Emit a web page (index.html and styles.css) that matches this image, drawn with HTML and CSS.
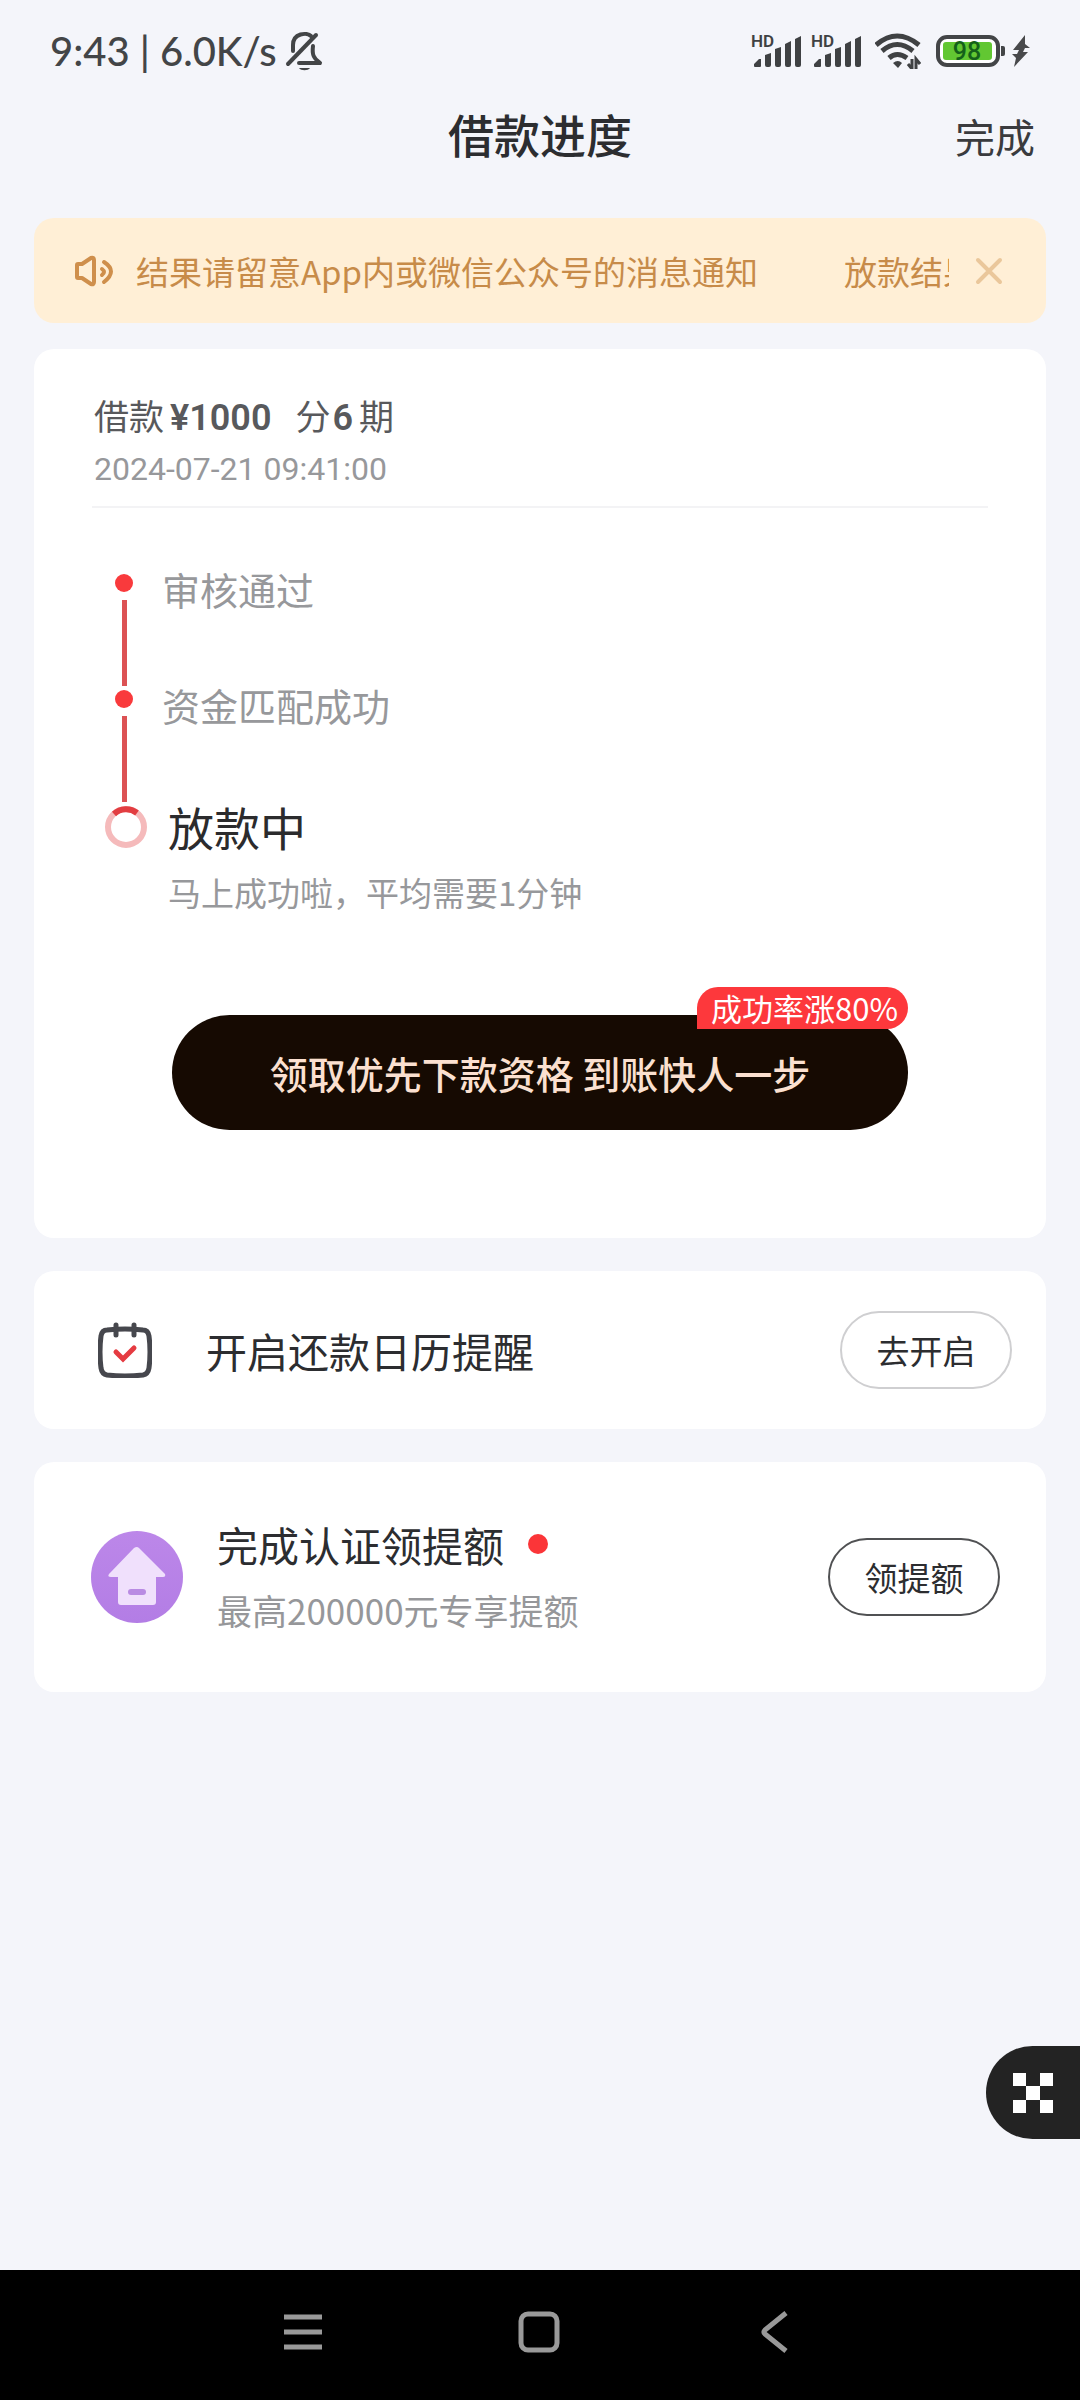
FILE: index.html
```html
<!DOCTYPE html>
<html lang="zh-CN">
<head>
<meta charset="utf-8">
<meta name="viewport" content="width=device-width, initial-scale=1">
<title>借款进度</title>
<link rel="stylesheet" href="styles.css">
</head>
<body>
<div class="status">
  <div class="status-left">
    <span>9:43 | 6.0K/s</span>
    <svg class="bell" width="38" height="40" viewBox="0 0 38 40" fill="none" stroke="#434547" stroke-width="4" stroke-linecap="round" stroke-linejoin="round">
      <path d="M8 20v-6c0-12 14-13 18-9"/>
      <path d="M28 15c-1 8 0 12 7 17H14"/>
      <path d="M3 33L31 4"/>
      <path d="M14 37h11c-2 3-9 3-11 0z" fill="#434547" stroke="none"/>
    </svg>
  </div>
  <div class="status-right">
    <svg class="signal" width="50" height="36" viewBox="0 0 50 36" fill="#3f4143">
      <text class="hd" x="-1" y="14">HD</text>
      <path d="M2 33v-2l5-5h2v7q0 1-1 1H3q-1 0-1-1zM13 22l6-2v12q0 2-2 2h-2q-2 0-2-2zM23 16l6-2v18q0 2-2 2h-2q-2 0-2-2zM33 11l6-3v24q0 2-2 2h-2q-2 0-2-2zM43 6l6-3v29q0 2-2 2h-2q-2 0-2-2z"/>
    </svg>
    <svg class="signal" width="50" height="36" viewBox="0 0 50 36" fill="#3f4143">
      <text class="hd" x="-1" y="14">HD</text>
      <path d="M2 33v-2l5-5h2v7q0 1-1 1H3q-1 0-1-1zM13 22l6-2v12q0 2-2 2h-2q-2 0-2-2zM23 16l6-2v18q0 2-2 2h-2q-2 0-2-2zM33 11l6-3v24q0 2-2 2h-2q-2 0-2-2zM43 6l6-3v29q0 2-2 2h-2q-2 0-2-2z"/>
    </svg>
    <svg class="wifi" width="46" height="36" viewBox="0 0 46 36" fill="none" stroke="#3f4143" stroke-width="5">
      <path d="M1 12Q22 -6 44 12"/>
      <path d="M7 18Q22 5 38 18"/>
      <path d="M14 25Q22 18 32 25"/>
      <path d="M18 30q5-4 9 0l-4 5z" fill="#3f4143" stroke="none"/>
      <path d="M37 26v10l-4-5M41 36V26l4 5" stroke-width="3"/>
    </svg>
    <svg class="battery" width="70" height="32" viewBox="0 0 70 32">
      <rect x="2" y="2" width="60" height="28" rx="9" fill="#fff" stroke="#434547" stroke-width="4"/>
      <rect x="7" y="7" width="49" height="18" rx="3" fill="#62c732"/>
      <path d="M65 11h2q2 0 2 2v6q0 2-2 2h-2z" fill="#434547"/>
      <text class="pct" x="31" y="25" text-anchor="middle">98</text>
    </svg>
    <svg width="18" height="32" viewBox="0 0 18 32" fill="#48494b"><path d="M13 0L1 15h6l-2 4H0l4 4-2 9L16 17h-5l2-4h5l-5-4z"/></svg>
  </div>
</div>

<header class="topbar">
  <h1>借款进度</h1>
  <button class="done" type="button">完成</button>
</header>

<main>
  <section class="notice">
    <svg width="40" height="36" viewBox="0 0 40 36" fill="none" stroke="#cf8f4c" stroke-width="4" stroke-linejoin="round" stroke-linecap="round">
      <path d="M4 11h4l9-6q3-1 3 2v22q0 3-3 2l-9-6H4q-1 0-1-1V12q0-1 1-1z"/>
      <path d="M30 9q14 9 0 20"/>
      <path d="M28 16q4 3 0 6"/>
    </svg>
    <div class="ticker"><span>结果请留意App内或微信公众号的消息通知</span><span>放款结果</span></div>
    <button class="close" type="button" aria-label="关闭">
      <svg width="28" height="28" viewBox="0 0 28 28" stroke="#eac79b" stroke-width="4" stroke-linecap="round"><path d="M3 3l22 22M25 3L3 25"/></svg>
    </button>
  </section>

  <section class="card loan">
    <div class="summary">
      <p class="amount">借款<b>¥1000</b><span class="term">分<b>6</b>期</span></p>
      <time class="time">2024-07-21 09:41:00</time>
    </div>
    <ol class="steps">
      <li class="step"><span class="rail"><i class="dot"></i><i class="line"></i></span><span class="label">审核通过</span></li>
      <li class="step"><span class="rail"><i class="dot"></i><i class="line"></i></span><span class="label">资金匹配成功</span></li>
      <li class="step current">
        <span class="rail">
          <svg width="44" height="44" viewBox="0 0 44 44" fill="none" stroke-width="6"><circle cx="22" cy="22" r="18" stroke="#f5babb"/><path d="M10 9A18 18 0 0 1 33 8" stroke="#e23d41"/></svg>
        </span>
        <div><strong>放款中</strong><p>马上成功啦，平均需要1分钟</p></div>
      </li>
    </ol>
    <button class="cta" type="button">领取优先下款资格 到账快人一步<span class="badge">成功率涨80%</span></button>
  </section>

  <section class="card row calendar">
    <svg width="54" height="56" viewBox="0 0 54 56" fill="none" stroke="#46474d" stroke-width="5" stroke-linecap="round">
      <path d="M9 8Q27 6 45 8Q50 8 51 14Q53 30 51 46Q50 52 45 53Q27 55 9 53Q4 52 3 46Q1 30 3 14Q4 8 9 8z"/>
      <path d="M18 3v10M36 3v10"/>
      <path d="M18 30l7 7 11-11" stroke="#e53b41"/>
    </svg>
    <h2>开启还款日历提醒</h2>
    <button class="pill" type="button">去开启</button>
  </section>

  <section class="card row quota">
    <svg width="92" height="92" viewBox="0 0 92 92">
      <defs><linearGradient id="violet" x1="0" y1="0" x2="0" y2="1"><stop offset="0" stop-color="#bc87e9"/><stop offset="1" stop-color="#b37de5"/></linearGradient></defs>
      <circle cx="46" cy="46" r="46" fill="url(#violet)"/>
      <path d="M43 17q3-2 5 0l26 26q1 3-2 3h-7v25q0 3-3 3H30q-3 0-3-3V46h-7q-4 0-2-3z" fill="#f0e0fc"/>
      <rect x="37" y="58" width="18" height="6" rx="3" fill="#b98be3"/>
    </svg>
    <div class="quota-text">
      <h2>完成认证领提额<i class="new"></i></h2>
      <p>最高200000元专享提额</p>
    </div>
    <button class="pill dark" type="button">领提额</button>
  </section>
</main>

<button class="float" type="button" aria-label="快捷入口">
  <svg width="40" height="40" viewBox="0 0 40 40" fill="#fff"><path d="M0 0h13v13H0zM27 0h13v13H27zM13 13h14v14H13zM0 27h13v13H0zM27 27h13v13H27z"/></svg>
</button>

<nav class="sysnav">
  <button type="button" aria-label="菜单"><svg width="44" height="44" viewBox="0 0 44 44" stroke="#999" stroke-width="5"><path d="M3 7h38M3 22h38M3 37h38"/></svg></button>
  <button type="button" aria-label="主屏幕"><svg width="44" height="44" viewBox="0 0 44 44" fill="none" stroke="#999" stroke-width="5"><rect x="4" y="4" width="36" height="36" rx="7"/></svg></button>
  <button type="button" aria-label="返回"><svg width="44" height="44" viewBox="0 0 44 44" fill="none" stroke="#999" stroke-width="5" stroke-linejoin="round"><path d="M33 3L12 20q-2 2 0 4L33 41"/></svg></button>
</nav>
</body>
</html>
```
FILE: styles.css
```css
* { box-sizing: border-box; }
body {
  margin: 0;
  min-height: 100vh;
  display: flex;
  flex-direction: column;
  position: relative;
  background: #f4f5fa;
  color: #2c2d30;
  font-family: "Noto Sans CJK SC", sans-serif;
}
h1, h2, p, ol { margin: 0; padding: 0; font-weight: 400; }
button { font: inherit; color: inherit; border: 0; background: none; padding: 0; cursor: pointer; }
svg { display: block; flex: none; }

.status {
  display: flex;
  justify-content: space-between;
  align-items: center;
  height: 102px;
  padding: 0 50px;
  color: #434547;
  font: 500 40px/48px Lato, sans-serif;
}
.status-left { display: flex; align-items: center; gap: 8px; }
.status-right { display: flex; align-items: center; }
.signal { margin-right: 10px; overflow: visible; }
.wifi { margin: 0 15px 0 3px; }
.battery { margin-right: 6px; }
.hd { font: 600 17px Roboto, sans-serif; }
.pct { font: 500 25px Roboto, sans-serif; fill: #14611a; }

.topbar {
  display: grid;
  grid-template-columns: 1fr auto 1fr;
  align-items: center;
  height: 68px;
  padding: 0 45px;
}
.topbar h1 { grid-column: 2; padding-bottom: 6px; font-size: 46px; line-height: 62px; font-weight: 500; }
.done { justify-self: end; font-size: 40px; line-height: 68px; color: #3a3b3e; }

main {
  flex: 1;
  display: flex;
  flex-direction: column;
  gap: 33px;
  padding: 48px 34px;
}
.notice {
  display: flex;
  align-items: center;
  height: 105px;
  margin-bottom: -7px;
  padding: 0 43px 0 40px;
  border-radius: 20px;
  background: #ffefd6;
  color: #c78b49;
}
.ticker {
  flex: 1;
  display: flex;
  gap: 86px;
  margin: 0 26px 0 22px;
  overflow: hidden;
  white-space: nowrap;
  font-size: 33px;
  line-height: 48px;
}
.ticker span { flex: none; }

.card { background: #fff; border-radius: 20px; }
.loan { display: flex; flex-direction: column; padding: 40px 58px 108px; }
.summary { border-bottom: 2px solid #f3f3f5; padding: 0 2px 12px; }
.amount { font-size: 35px; line-height: 52px; color: #58595c; }
.amount b { font-family: Roboto, sans-serif; font-weight: 600; font-size: 36px; margin: 0 6px; }
.term { margin-left: 18px; }
.term b { margin: 0 6px 0 2px; }
.time { display: block; font: 400 32px/50px Roboto, sans-serif; color: #97989b; }

.steps { list-style: none; padding: 54px 0 0 10px; color: #97989b; }
.step { display: flex; gap: 16px; height: 116px; }
.rail { display: flex; flex-direction: column; align-items: center; width: 44px; padding-top: 12px; }
.dot { flex: none; width: 18px; height: 18px; border-radius: 50%; background: #f93a3c; }
.line { flex: none; width: 5px; height: 86px; margin-top: 8px; background: #dc5254; }
.label { font-size: 38px; line-height: 54px; }
.current { height: auto; gap: 20px; margin-left: 2px; }
.current .rail { padding-top: 11px; }
.current strong { display: block; font-weight: 400; font-size: 46px; line-height: 64px; color: #2b2b2d; }
.current p { padding-top: 8px; font-size: 33px; line-height: 52px; }

.cta {
  position: relative;
  width: 736px;
  max-width: 100%;
  align-self: center;
  height: 115px;
  margin-top: 97px;
  border-radius: 58px;
  background: #160a02;
  color: #fbe0d0;
  font-size: 38px;
  font-weight: 500;
}
.badge {
  position: absolute;
  right: 0;
  top: -28px;
  padding: 0 10px 0 14px;
  border-radius: 21px 21px 21px 0;
  background: #fd383c;
  color: #fff;
  font-size: 31px;
  font-weight: 400;
  line-height: 42px;
}

.row { display: flex; align-items: center; }
.row h2 { font-size: 41px; line-height: 60px; }
.pill {
  margin-left: auto;
  width: 172px;
  height: 78px;
  border: 2px solid #cfcfd1;
  border-radius: 39px;
  font-size: 33px;
  line-height: 48px;
}
.pill.dark { border-color: #505153; }
.calendar { height: 158px; padding: 0 34px 0 64px; }
.calendar h2 { margin-left: 54px; }
.quota { height: 230px; padding: 0 46px 0 57px; }
.quota-text { margin-left: 34px; }
.quota h2 { display: flex; align-items: center; gap: 24px; line-height: 66px; }
.new { width: 20px; height: 20px; border-radius: 50%; background: #fb3538; }
.quota p { font-size: 35px; line-height: 66px; color: #96979a; }

.float {
  position: absolute;
  right: 0;
  bottom: 261px;
  width: 94px;
  height: 93px;
  padding-left: 27px;
  border-radius: 47px 0 0 47px;
  background: #232323;
}

.sysnav {
  display: flex;
  justify-content: center;
  align-items: center;
  gap: 192px;
  height: 130px;
  padding: 0 2px 6px 0;
  background: #000;
}
```
